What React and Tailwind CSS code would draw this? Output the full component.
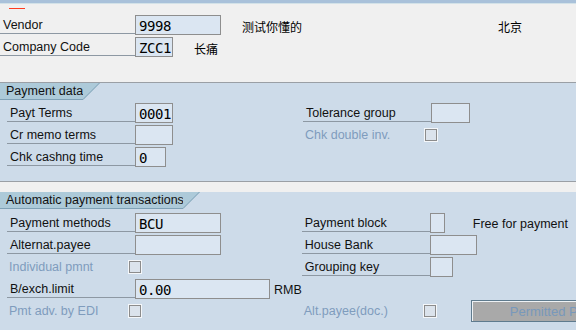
import React from "react";

const lbl = "font-['Liberation_Sans',Arial,sans-serif] text-[12.5px] text-[#111] whitespace-nowrap";
const dis = "font-['Liberation_Sans',Arial,sans-serif] text-[12.5px] text-[#7f9cbd] whitespace-nowrap";
const cjk = "font-['Noto_Sans_CJK_SC',sans-serif] text-[12px] text-black whitespace-nowrap";

function Input({ w, value }) {
  return (
    <div
      className={`${w} h-[20px] shrink-0 bg-[#dbe6f2] border border-[#8e8e8e] flex items-center pl-[3px] pt-[1px] font-['DejaVu_Sans_Mono',monospace] text-[14px] tracking-[-0.4px] text-black leading-none`}
    >
      {value}
    </div>
  );
}

function Label({ text, w = "w-[128px]", pl = "pl-[3px]" }) {
  return (
    <div className={`${w} h-[19px] shrink-0 border-b border-[#8d98a3] flex items-center pt-[2px] ${pl} ${lbl}`}>
      {text}
    </div>
  );
}

function Check() {
  return (
    <div className="w-[14px] h-[14px] shrink-0 border border-[#f4f7fa] bg-transparent">
      <div className="w-full h-full border border-[#8c8c8c] bg-[#dbe3ec]" />
    </div>
  );
}

function Tab({ text, w }) {
  return (
    <div className="flex h-[17px]">
      <div className={`${w} h-[17px] shrink-0 bg-[#adcad9] border-b border-[#7fa1b6] pl-[6px] pt-[1px] flex items-center ${lbl}`}>
        {text}
      </div>
      <svg width="17" height="17" viewBox="0 0 17 17" className="shrink-0">
        <polygon points="0,0 17,0 0,17" fill="#adcad9" />
        <line x1="16.5" y1="0" x2="0" y2="16.5" stroke="#7fa1b6" strokeWidth="1" />
      </svg>
    </div>
  );
}

export default function App() {
  return (
    <div className="w-[576px] h-[330px] overflow-hidden bg-[#f0f0f0] flex flex-col">
      <div className="h-[3px] bg-[#a9c1da] shrink-0" />
      <div className="h-[1px] bg-[#d3e2e8] shrink-0" />
      <div className="ml-[9px] mt-[4px] w-[16px] h-[1px] bg-[#ff3b1f] shrink-0" />

      {/* header rows */}
      <div className="mt-[6px] flex flex-col gap-[2px]">
        <div className="flex items-start h-[20px]">
          <Label text="Vendor" w="w-[135px]" />
          <Input w="w-[86px]" value="9998" />
          <div className={`ml-[21px] h-[20px] pt-[3px] flex items-center ${cjk}`}>测试你懂的</div>
          <div className={`ml-[196px] h-[20px] pt-[3px] flex items-center ${cjk}`}>北京</div>
        </div>
        <div className="flex items-start h-[20px]">
          <Label text="Company Code" w="w-[135px]" />
          <Input w="w-[38px]" value="ZCC1" />
          <div className={`ml-[21px] h-[20px] pt-[3px] flex items-center ${cjk}`}>长痛</div>
        </div>
      </div>

      {/* Payment data */}
      <div className="mt-[25px] h-[100px] shrink-0 bg-[#cddbe9] border-y border-[#9a9fa5] flex flex-col">
        <Tab text="Payment data" w="w-[83px]" />
        <div className="mt-[3px] flex">
          <div className="w-[296px] ml-[7px] flex flex-col gap-[2px]">
            <div className="flex items-start h-[20px]">
              <Label text="Payt Terms" />
              <Input w="w-[38px]" value="0001" />
            </div>
            <div className="flex items-start h-[20px]">
              <Label text="Cr memo terms" />
              <Input w="w-[38px]" value="" />
            </div>
            <div className="flex items-start h-[20px]">
              <Label text="Chk cashng time" />
              <Input w="w-[31px]" value="0" />
            </div>
          </div>
          <div className="flex flex-col gap-[2px]">
            <div className="flex items-start h-[20px]">
              <Label text="Tolerance group" />
              <Input w="w-[39px]" value="" />
            </div>
            <div className="flex items-center h-[20px]">
              <div className={`w-[121px] pl-[2px] pt-[1px] ${dis}`}>Chk double inv.</div>
              <Check />
            </div>
          </div>
        </div>
      </div>

      {/* Automatic payment transactions */}
      <div className="mt-[10px] flex-1 bg-[#cddbe9] flex flex-col">
        <Tab text="Automatic payment transactions" w="w-[183px]" />
        <div className="mt-[4px] flex">
          <div className="w-[296px] ml-[7px] flex flex-col gap-[2px]">
            <div className="flex items-start h-[20px]">
              <Label text="Payment methods" />
              <Input w="w-[86px]" value="BCU" />
            </div>
            <div className="flex items-start h-[20px]">
              <Label text="Alternat.payee" />
              <Input w="w-[86px]" value="" />
            </div>
            <div className="flex items-center h-[20px]">
              <div className={`w-[121px] pl-[2px] pt-[1px] ${dis}`}>Individual pmnt</div>
              <Check />
            </div>
            <div className="flex items-start h-[20px]">
              <Label text="B/exch.limit" />
              <Input w="w-[135px]" value="0.00" />
              <div className={`ml-[4px] h-[20px] pt-[2px] flex items-center ${lbl}`}>RMB</div>
            </div>
            <div className="flex items-center h-[20px]">
              <div className={`w-[121px] pl-[2px] pt-[1px] ${dis}`}>Pmt adv. by EDI</div>
              <Check />
            </div>
          </div>
          <div className="flex flex-col gap-[2px]">
            <div className="flex items-start h-[20px]">
              <Label text="Payment block" />
              <Input w="w-[15px]" value="" />
              <div className={`ml-[28px] h-[20px] pt-[2px] flex items-center ${lbl}`}>Free for payment</div>
            </div>
            <div className="flex items-start h-[20px]">
              <Label text="House Bank" />
              <Input w="w-[47px]" value="" />
            </div>
            <div className="flex items-start h-[20px]">
              <Label text="Grouping key" />
              <Input w="w-[23px]" value="" />
            </div>
            <div className="h-[20px]" />
            <div className="flex items-center h-[20px]">
              <div className={`w-[121px] pl-[2px] pt-[1px] ${dis}`}>Alt.payee(doc.)</div>
              <Check />
              <div className="ml-[34px] w-[200px] h-[22px] shrink-0 border border-[#5f7b8e] bg-[#a9a9a9] flex items-center">
                <div className="w-full h-full border-l border-t border-[#eef2f5] flex items-center pl-[37px] whitespace-nowrap font-['Liberation_Sans',Arial,sans-serif] text-[13px] text-[#7898bb]">
                  Permitted Payment Methods
                </div>
              </div>
            </div>
          </div>
        </div>
      </div>
    </div>
  );
}
